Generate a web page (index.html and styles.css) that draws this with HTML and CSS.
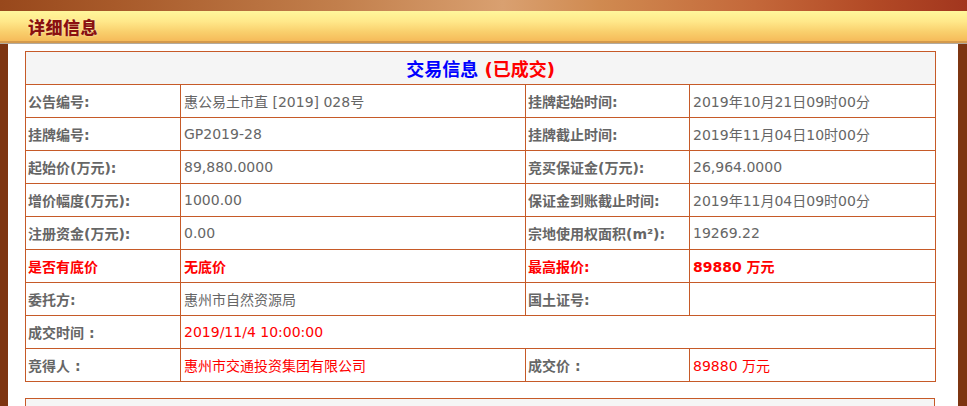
FILE: index.html
```html
<!DOCTYPE html>
<html lang="zh-CN">
<head>
<meta charset="utf-8">
<title>详细信息</title>
<link rel="stylesheet" href="styles.css">
</head>
<body>
<div class="topband"></div>
<div class="titlebar"><h1 class="title">详细信息</h1></div>
<div class="frame">
  <div class="side side-left"></div>
  <main class="content">
    <table class="info">
      <colgroup>
        <col class="c1"><col class="c2"><col class="c3"><col class="c4">
      </colgroup>
      <tr class="head-row">
        <td colspan="4" class="head"><span class="blue">交易信息</span> <span class="red">(已成交)</span></td>
      </tr>
      <tr><td class="lbl">公告编号:</td><td class="val">惠公易土市直 [2019] 028号</td><td class="lbl">挂牌起始时间:</td><td class="val">2019年10月21日09时00分</td></tr>
      <tr><td class="lbl">挂牌编号:</td><td class="val">GP2019-28</td><td class="lbl">挂牌截止时间:</td><td class="val">2019年11月04日10时00分</td></tr>
      <tr><td class="lbl">起始价(万元):</td><td class="val">89,880.0000</td><td class="lbl">竞买保证金(万元):</td><td class="val">26,964.0000</td></tr>
      <tr><td class="lbl">增价幅度(万元):</td><td class="val">1000.00</td><td class="lbl">保证金到账截止时间:</td><td class="val">2019年11月04日09时00分</td></tr>
      <tr><td class="lbl">注册资金(万元):</td><td class="val">0.00</td><td class="lbl">宗地使用权面积(m²):</td><td class="val">19269.22</td></tr>
      <tr><td class="lbl hot">是否有底价</td><td class="val hot bold">无底价</td><td class="lbl hot">最高报价:</td><td class="val hot bold">89880 万元</td></tr>
      <tr><td class="lbl">委托方:</td><td class="val">惠州市自然资源局</td><td class="lbl">国土证号:</td><td class="val"></td></tr>
      <tr><td class="lbl">成交时间<span class="fw">:</span></td><td class="val red-val" colspan="3">2019/11/4 10:00:00</td></tr>
      <tr><td class="lbl">竞得人<span class="fw">:</span></td><td class="val red-val">惠州市交通投资集团有限公司</td><td class="lbl">成交价<span class="fw">:</span></td><td class="val red-val">89880 万元</td></tr>
    </table>
    <div class="next-box"></div>
  </main>
  <div class="side side-right"></div>
</div>
</body>
</html>
```
FILE: styles.css
```css
html, body {
  margin: 0;
  padding: 0;
  background: #ffffff;
  overflow: hidden;
}
body {
  width: 967px;
  height: 406px;
  font-family: "DejaVu Sans", "Noto Sans CJK SC", sans-serif;
}
.topband {
  height: 11px;
  background: linear-gradient(90deg, #98481c 0%, #a85a2a 12%, #c27f4c 35%, #d9a070 52%, #d08a50 62%, #c4683a 78%, #b34a26 90%, #a2361e 100%);
}
.titlebar {
  height: 30px;
  background: linear-gradient(180deg, #fff79c 0%, #ffe88a 35%, #f9cf6c 70%, #f5bb5a 100%);
  border-bottom: 2px solid #d49a4c;
  box-shadow: 0 1px 0 #b3aa9e;
  display: flex;
  align-items: center;
  padding-left: 28px;
}
.title {
  margin: 0;
  font-family: "Noto Sans CJK SC", sans-serif;
  font-size: 17px;
  font-weight: 900;
  color: #8a1010;
  letter-spacing: 0.5px;
  text-shadow: 0 0 2px #fff4c0;
  line-height: 1;
}
.frame {
  display: flex;
  margin-top: 1px;
  height: 362px;
  overflow: hidden;
}
.side {
  background: #7d3511;
}
.side-left { width: 8px; }
.side-right { width: 9px; }
.content {
  width: 950px;
  height: 362px;
  overflow: hidden;
  background: #ffffff;
  padding: 7px 0 0 17px;
  box-sizing: border-box;
}
.info {
  border-collapse: collapse;
  table-layout: fixed;
  width: 910px;
  font-size: 14px;
}
.c1 { width: 155px; }
.c2 { width: 345px; }
.c3 { width: 164px; }
.c4 { width: 246px; }
.info td {
  border: 1px solid #c65a28;
  height: 32px;
  padding: 0;
  box-sizing: border-box;
  color: #666666;
  white-space: nowrap;
}
.info tr { height: 33px; }
.head {
  background: #f5f5f5;
  text-align: center;
  font-size: 18px;
  font-weight: bold;
}
.blue { color: #0000ff; }
.red { color: #ff0000; }
.lbl {
  font-weight: bold;
  padding-left: 2px !important;
}
.fw {
  margin-left: 5px;
}
.val {
  padding-left: 3px !important;
}
.hot { color: #ff0000 !important; }
.bold { font-weight: bold; }
.red-val { color: #ff0000 !important; }
.next-box {
  margin-top: 16px;
  width: 910px;
  height: 40px;
  border: 1px solid #c65a28;
  background: #f5f5f5;
  box-sizing: border-box;
}
```
